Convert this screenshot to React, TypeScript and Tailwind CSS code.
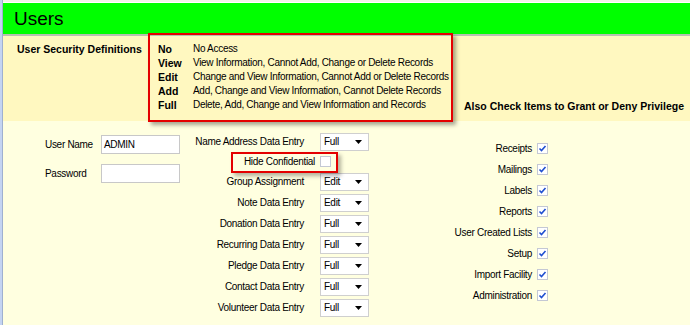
import React from "react";

const defs = [
  ["No", "No Access"],
  ["View", "View Information, Cannot Add, Change or Delete Records"],
  ["Edit", "Change and View Information, Cannot Add or Delete Records"],
  ["Add", "Add, Change and View Information, Cannot Delete Records"],
  ["Full", "Delete, Add, Change and View Information and Records"],
];

const entries = [
  ["Group Assignment", "Edit"],
  ["Note Data Entry", "Edit"],
  ["Donation Data Entry", "Full"],
  ["Recurring Data Entry", "Full"],
  ["Pledge Data Entry", "Full"],
  ["Contact Data Entry", "Full"],
  ["Volunteer Data Entry", "Full"],
];

const privileges = [
  "Receipts",
  "Mailings",
  "Labels",
  "Reports",
  "User Created Lists",
  "Setup",
  "Import Facility",
  "Administration",
];

function Select({ value }: { value: string }) {
  return (
    <div className="w-[49px] h-[18px] bg-white border border-[#cfcfcf] flex items-center justify-between pl-[3px] pr-[6px]">
      <span>{value}</span>
      <svg width="7" height="4" viewBox="0 0 7 4">
        <path d="M0 0h7L3.5 4z" fill="#000" />
      </svg>
    </div>
  );
}

function Check({ checked }: { checked: boolean }) {
  return (
    <div className="w-[11px] h-[11px] bg-white border border-[#c4c8d4] flex items-center justify-center">
      {checked && (
        <svg width="9" height="9" viewBox="0 0 9 9">
          <path d="M1.5 4.5l2 2 4-4.5" fill="none" stroke="#1f4fd0" strokeWidth="1.6" />
        </svg>
      )}
    </div>
  );
}

export default function App() {
  return (
    <div
      className="relative w-[690px] h-[325px] flex bg-[#ffffe0] text-black text-[10px] tracking-[-0.3px] leading-[14px] overflow-hidden"
      style={{ fontFamily: "'Liberation Sans', Arial, sans-serif" }}
    >
      {/* left window edge */}
      <div className="w-[3px] flex">
        <div className="w-[2px] bg-[#c4d4f2]"></div>
        <div className="w-[1px] bg-[#9fb0d0]"></div>
      </div>

      <div className="flex-1 flex flex-col">
        <div className="h-[3px] bg-[#f2f2ea] border-b border-white"></div>

        {/* title bar */}
        <div className="h-[33px] bg-[#00ff00] border-b-2 border-[#b8c0b0] flex items-center pl-[11px]">
          <span className="text-[19px] leading-none tracking-normal">Users</span>
        </div>

        {/* definitions band */}
        <div className="h-[85px] bg-[#fff8c0] flex pl-[14px] pt-[6px]">
          <div className="w-[141px] font-bold text-[10.5px] tracking-normal">User Security Definitions</div>
          <div className="w-[306px] flex flex-col">
            {defs.map(([k, v]) => (
              <div key={k} className="flex">
                <span className="w-[35px] font-bold text-[10.5px] tracking-normal">{k}</span>
                <span>{v}</span>
              </div>
            ))}
          </div>
          <div className="self-end pb-[8px] font-bold text-[10.5px] tracking-normal whitespace-nowrap">
            Also Check Items to Grant or Deny Privilege
          </div>
        </div>

        {/* form area */}
        <div className="flex-1 flex pl-[42px]">
          <div className="w-[135px] flex flex-col gap-[10px] pt-[14px]">
            <div className="flex items-center h-[19px]">
              <span className="w-[56px]">User Name</span>
              <div className="w-[79px] h-[19px] bg-white border border-[#c8c8c8] pl-[2px] flex items-center">ADMIN</div>
            </div>
            <div className="flex items-center h-[19px]">
              <span className="w-[56px]">Password</span>
              <div className="w-[79px] h-[19px] bg-white border border-[#c8c8c8]"></div>
            </div>
          </div>

          <div className="flex flex-col pt-[11px]">
            <div className="flex items-center h-[20px]">
              <span className="w-[124px] text-right">Name Address Data Entry</span>
              <div className="ml-[16px]">
                <Select value="Full" />
              </div>
            </div>
            <div className="flex items-center h-[19px]">
              <span className="w-[135px] text-right">Hide Confidential</span>
              <div className="ml-[5px]">
                <Check checked={false} />
              </div>
            </div>
            {entries.map(([label, val]) => (
              <div key={label} className="flex items-center h-[21px]">
                <span className="w-[124px] text-right">{label}</span>
                <div className="ml-[16px]">
                  <Select value={val} />
                </div>
              </div>
            ))}
          </div>

          <div className="flex flex-col pt-[17px]">
            {privileges.map((p) => (
              <div key={p} className="flex items-center h-[21px]">
                <span className="w-[163px] text-right">{p}</span>
                <div className="ml-[5px]">
                  <Check checked={true} />
                </div>
              </div>
            ))}
          </div>
        </div>
      </div>

      {/* annotation boxes */}
      <div className="absolute left-[148px] top-[33px] w-[305px] h-[89px] border-2 border-[#e40000] shadow-[3px_3px_4px_rgba(0,0,0,0.35)]"></div>
      <div className="absolute left-[231px] top-[152px] w-[107px] h-[21px] border-2 border-[#e40000] shadow-[3px_3px_4px_rgba(0,0,0,0.3)]"></div>
    </div>
  );
}
